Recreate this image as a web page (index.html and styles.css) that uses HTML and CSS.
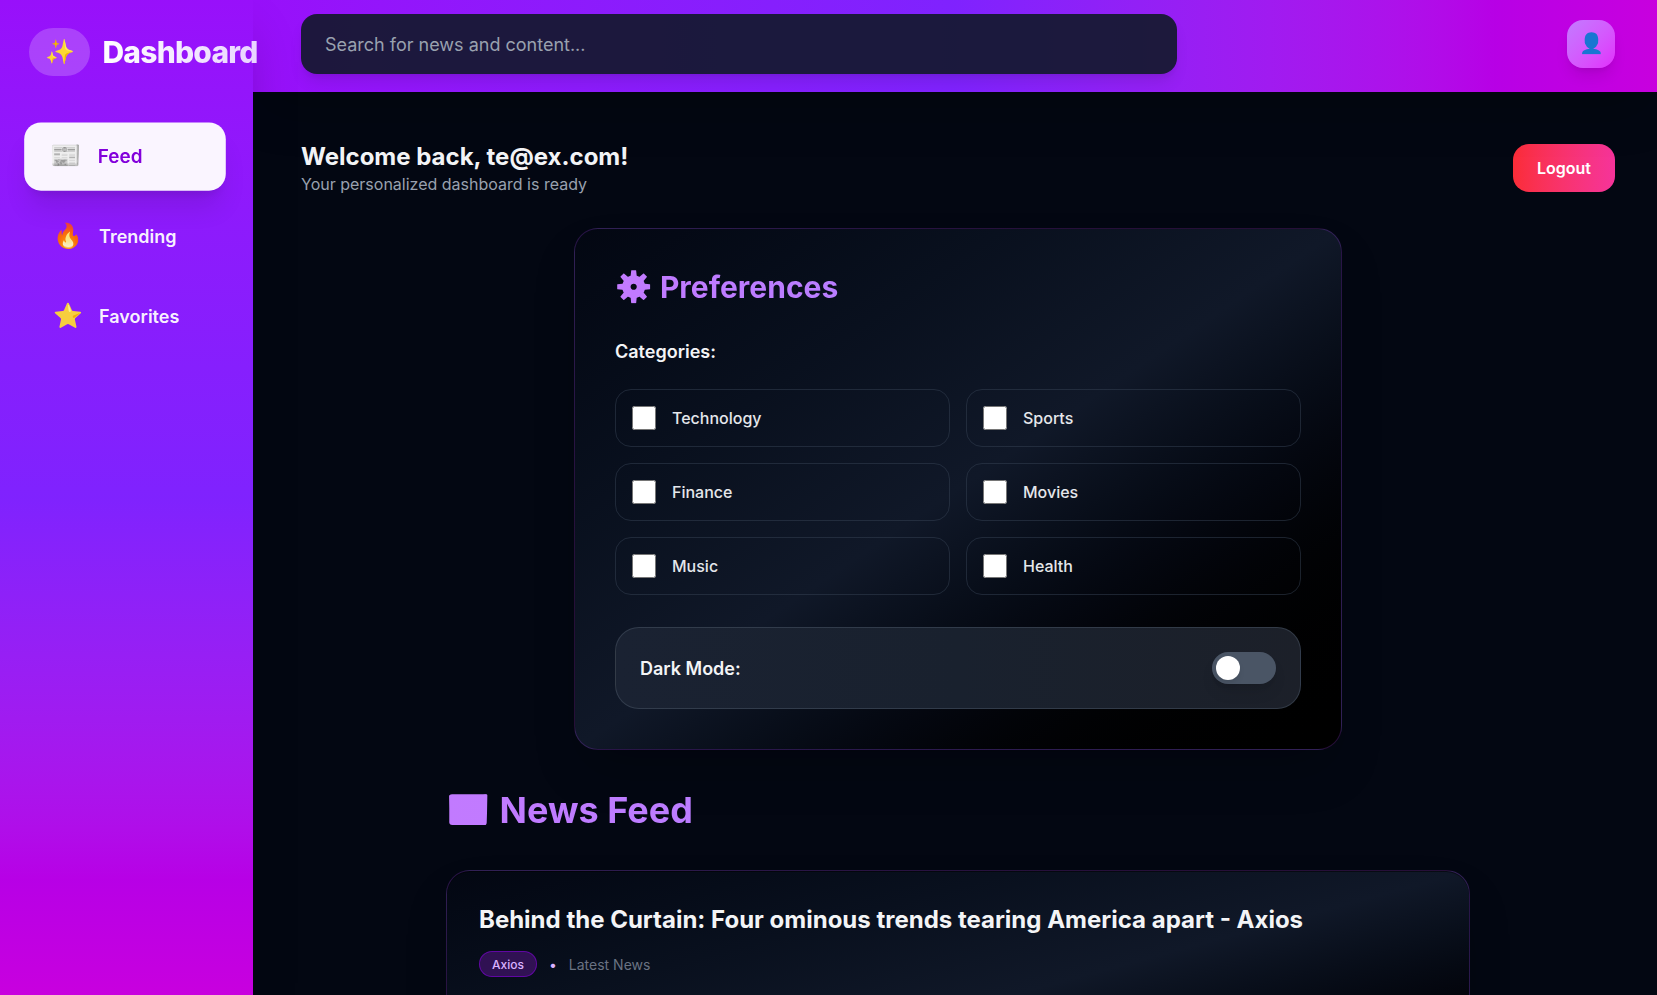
FILE: index.html
```html
<!DOCTYPE html>
<html lang="en">
<head>
<meta charset="utf-8">
<title>Dashboard</title>
<link rel="stylesheet" href="styles.css">
</head>
<body>
<div class="app">
  <aside class="sidebar">
    <div class="brand">
      <span class="brand-badge">✨</span>
      <h1 class="brand-title">Dashboard</h1>
    </div>
    <nav class="nav">
      <a class="nav-item active"><span class="nav-icon">📰</span><span class="nav-text">Feed</span></a>
      <a class="nav-item"><span class="nav-icon">🔥</span><span class="nav-text">Trending</span></a>
      <a class="nav-item"><span class="nav-icon">⭐</span><span class="nav-text">Favorites</span></a>
    </nav>
  </aside>
  <div class="page">
    <header class="header">
      <input class="search" type="text" placeholder="Search for news and content...">
      <div class="avatar">👤</div>
    </header>
    <main class="main">
      <div class="welcome">
        <div>
          <h2 class="welcome-title">Welcome back, te@ex.com!</h2>
          <p class="welcome-sub">Your personalized dashboard is ready</p>
        </div>
        <button class="logout">Logout</button>
      </div>
      <section class="card prefs">
        <h2 class="prefs-title"><span class="title-icon gear">⚙️</span> Preferences</h2>
        <p class="label categories">Categories:</p>
        <div class="grid">
          <label class="option"><input class="check" type="checkbox"><span>Technology</span></label>
          <label class="option"><input class="check" type="checkbox"><span>Sports</span></label>
          <label class="option"><input class="check" type="checkbox"><span>Finance</span></label>
          <label class="option"><input class="check" type="checkbox"><span>Movies</span></label>
          <label class="option"><input class="check" type="checkbox"><span>Music</span></label>
          <label class="option"><input class="check" type="checkbox"><span>Health</span></label>
        </div>
        <div class="mode">
          <span class="label">Dark Mode:</span>
          <span class="toggle"><span class="knob"></span></span>
        </div>
      </section>
      <section class="feed">
        <h2 class="feed-title"><span class="title-icon">📰</span> News Feed</h2>
        <article class="card story">
          <h3 class="story-title">Behind the Curtain: Four ominous trends tearing America apart - Axios</h3>
          <div class="meta">
            <span class="pill">Axios</span>
            <span class="dot">•</span>
            <span class="kind">Latest News</span>
          </div>
        </article>
      </section>
    </main>
  </div>
</div>
</body>
</html>
```
FILE: styles.css
```css
* { box-sizing: border-box; margin: 0; padding: 0; }

body {
  height: 995px;
  overflow: hidden;
  background: #030712;
  color: #f3f4f6;
  font-family: Inter, "Noto Sans", sans-serif;
  font-size: 16px;
  line-height: 24px;
}

.app { display: flex; height: 995px; overflow: hidden; }

.sidebar {
  position: relative;
  z-index: 2;
  flex: none;
  width: 253px;
  height: 995px;
  padding: 28px 31.8px 0 28.8px;
  background: linear-gradient(to bottom in oklab, oklch(55.8% 0.288 302.321), oklch(54.1% 0.281 293.009), oklch(59.1% 0.293 322.896));
  box-shadow: 0 25px 50px -12px rgba(0, 0, 0, 0.25);
}

.brand { display: flex; align-items: center; gap: 12.4px; height: 48px; margin-bottom: 47.5px; }

.brand-badge {
  display: flex;
  flex: none;
  justify-content: center;
  width: 61.2px;
  padding: 8px 0 8px 0.8px;
  border-radius: 24px;
  background: rgba(255, 255, 255, 0.2);
  font-size: 24px;
  line-height: 32px;
}

.brand-title {
  flex: none;
  font-size: 30px;
  line-height: 36px;
  font-weight: 800;
  letter-spacing: -0.75px;
  color: transparent;
  background: linear-gradient(to right in oklab, #fff, #e9d4ff);
  -webkit-background-clip: text;
  background-clip: text;
}

.nav { display: flex; flex-direction: column; gap: 16px; }

.nav-item {
  display: flex;
  align-items: center;
  gap: 16px;
  height: 64px;
  padding: 0 24px;
  border-radius: 16px;
  color: rgba(255, 255, 255, 0.95);
  font-size: 18px;
  font-weight: 600;
}

.nav-icon { font-size: 24px; line-height: 32px; }

.nav-text { padding: 2px 0 0 0.3px; }

.nav-item.active {
  height: 64.8px;
  margin-bottom: -0.3px;
  padding-left: 24.6px;
  gap: 15.2px;
  background: #faf5ff;
  color: #8200db;
  transform: scale(1.05);
  box-shadow: 0 20px 25px -5px rgba(0, 0, 0, 0.1), 0 8px 10px -6px rgba(0, 0, 0, 0.1);
}

.page { flex: 1; min-width: 0; }

.header {
  position: relative;
  z-index: 1;
  display: flex;
  align-items: flex-start;
  justify-content: space-between;
  height: 92px;
  padding: 14px 42px 0 48px;
  background: linear-gradient(to right in oklab, oklch(55.8% 0.288 302.321), oklch(54.1% 0.281 293.009), oklch(59.1% 0.293 322.896));
  box-shadow: 0 25px 50px -12px rgba(0, 0, 0, 0.25);
}

.search {
  width: 876px;
  height: 60px;
  padding: 0 24px;
  border: 0;
  border-radius: 16px;
  background: rgba(16, 24, 40, 0.9);
  color: #fff;
  font: 400 18px/28px Inter, sans-serif;
  box-shadow: 0 10px 15px -3px rgba(0, 0, 0, 0.1), 0 4px 6px -4px rgba(0, 0, 0, 0.1);
}

.search::placeholder { color: #99a1af; opacity: 1; }

.avatar {
  display: flex;
  align-items: center;
  justify-content: center;
  width: 48px;
  height: 48px;
  margin-top: 6px;
  padding-bottom: 2px;
  border-radius: 16px;
  background: linear-gradient(to bottom right in oklab, #c27aff, #e12afb);
  font-size: 20px;
  line-height: 28px;
  box-shadow: 0 10px 15px -3px rgba(0, 0, 0, 0.1), 0 4px 6px -4px rgba(0, 0, 0, 0.1);
}

.main { padding: 48px 42px 0 48px; }

.welcome { display: flex; align-items: center; justify-content: space-between; margin-bottom: 32px; }

.welcome-title { height: 32px; padding-top: 1px; font-size: 24px; line-height: 32px; font-weight: 700; }

.welcome-sub { color: #99a1af; }

.logout {
  width: 102px;
  height: 48px;
  border: 0;
  border-radius: 16px;
  background: linear-gradient(to right in oklab, #fb2c36, #f6339a);
  color: #fff;
  font: 600 16px/24px Inter, sans-serif;
}

.card {
  border: 1px solid rgba(173, 70, 255, 0.22);
  border-radius: 24px;
  background: linear-gradient(to bottom right in oklab, #030712, #101828, #000);
  box-shadow: 0 25px 50px -12px rgba(0, 0, 0, 0.25);
}

.prefs { width: 768px; margin: 0 auto 40px; padding: 40px; }

.prefs-title,
.feed-title {
  font-weight: 700;
  color: transparent;
  background: linear-gradient(to right in oklab, #c27aff, #a684ff);
  -webkit-background-clip: text;
  background-clip: text;
}

.title-icon { line-height: 0; vertical-align: 1px; }

.gear { margin-right: 0.8px; }

.prefs-title { font-size: 30px; line-height: 36px; height: 36px; margin-bottom: 32px; }

.label { height: 28px; padding-top: 1px; font-size: 18px; line-height: 28px; font-weight: 600; }

.categories { margin-bottom: 24px; }

.grid { display: grid; grid-template-columns: 1fr 1fr; gap: 16px; margin-bottom: 32px; }

.option {
  display: flex;
  align-items: center;
  gap: 16px;
  padding: 16px;
  border: 1px solid rgba(54, 65, 83, 0.5);
  border-radius: 16px;
  color: #e5e7eb;
  font-weight: 500;
}

.check { width: 24px; height: 24px; }

.mode {
  display: flex;
  align-items: center;
  justify-content: space-between;
  padding: 24px;
  border: 1px solid rgba(74, 85, 101, 0.5);
  border-radius: 24px;
  background: linear-gradient(to right, #1a2232, #19212e, #1c2029);
}

.toggle {
  width: 64px;
  height: 32px;
  padding: 4px;
  border-radius: 16px;
  background: #4a5565;
  box-shadow: 0 10px 15px -3px rgba(0, 0, 0, 0.1), 0 4px 6px -4px rgba(0, 0, 0, 0.1);
}

.knob {
  display: block;
  width: 24px;
  height: 24px;
  border-radius: 50%;
  background: #fff;
  box-shadow: 0 4px 6px -1px rgba(0, 0, 0, 0.1);
}

.feed { width: 1024px; margin: 0 auto; }

.feed-title { font-size: 36px; line-height: 40px; height: 40px; margin-bottom: 40px; }

.story {
  height: 280px;
  padding: 32px;
  box-shadow: inset 0 1px 0 rgba(0, 0, 0, 0.5), 0 25px 50px -12px rgba(0, 0, 0, 0.25);
}

.story-title { height: 32px; padding-top: 1px; font-size: 24px; line-height: 32px; font-weight: 700; margin-bottom: 16px; }

.meta { display: flex; align-items: center; gap: 12px; font-size: 14px; line-height: 20px; }

.pill {
  height: 26px;
  padding: 5px 12px 3px;
  border: 1px solid rgba(130, 0, 219, 0.6);
  border-radius: 13px;
  background: rgba(89, 22, 139, 0.5);
  color: #dab2ff;
  font-size: 12px;
  line-height: 16px;
  font-weight: 500;
}

.dot { padding-top: 2px; color: #dab2ff; }

.kind { padding-top: 2px; color: #6a7282; }
```
